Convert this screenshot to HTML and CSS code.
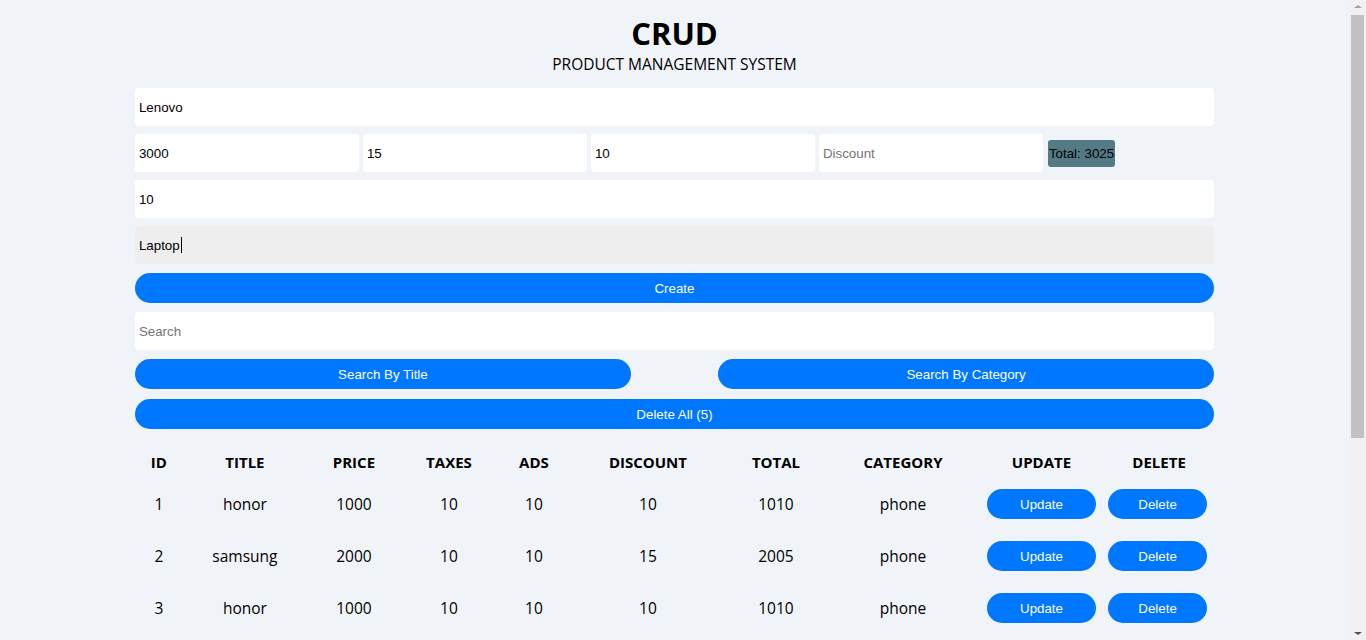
FILE: index.html
```html
<!DOCTYPE html>
<html>
<head>
<meta charset="utf-8">
<title>CRUD</title>
<link rel="stylesheet" href="styles.css">
</head>
<body>
<div class="crud">
  <div class="head">
    <h2 class="title">CRUD</h2>
    <p class="subtitle">PRODUCT MANAGEMENT SYSTEM</p>
  </div>
  <div class="inputs">
    <input class="field" type="text" value="Lenovo" placeholder="Title">
    <div class="price">
      <input class="field small" type="number" value="3000" placeholder="Price">
      <input class="field small" type="number" value="15" placeholder="Taxes">
      <input class="field small" type="number" value="10" placeholder="Ads">
      <input class="field small" type="number" placeholder="Discount">
      <span class="total">Total: 3025</span>
    </div>
    <input class="field" type="number" value="10" placeholder="Count">
    <div class="field focused">Laptop<span class="caret"></span></div>
    <button class="btn create">Create</button>
  </div>
  <div class="search-block">
    <input class="field" type="text" placeholder="Search">
    <div class="search-btns">
      <button class="btn">Search By Title</button>
      <button class="btn">Search By Category</button>
    </div>
    <button class="btn delete-all">Delete All (5)</button>
  </div>
  <table class="outputs">
    <colgroup>
      <col class="c-id"><col class="c-title"><col class="c-price"><col class="c-taxes"><col class="c-ads">
      <col class="c-disc"><col class="c-total"><col class="c-cat"><col class="c-upd"><col class="c-del">
    </colgroup>
    <thead>
      <tr><th>ID</th><th>TITLE</th><th>PRICE</th><th>TAXES</th><th>ADS</th><th>DISCOUNT</th><th>TOTAL</th><th>CATEGORY</th><th>UPDATE</th><th>DELETE</th></tr>
    </thead>
    <tbody>
      <tr><td>1</td><td>honor</td><td>1000</td><td>10</td><td>10</td><td>10</td><td>1010</td><td>phone</td><td><button class="btn upd">Update</button></td><td><button class="btn del">Delete</button></td></tr>
      <tr><td>2</td><td>samsung</td><td>2000</td><td>10</td><td>10</td><td>15</td><td>2005</td><td>phone</td><td><button class="btn upd">Update</button></td><td><button class="btn del">Delete</button></td></tr>
      <tr><td>3</td><td>honor</td><td>1000</td><td>10</td><td>10</td><td>10</td><td>1010</td><td>phone</td><td><button class="btn upd">Update</button></td><td><button class="btn del">Delete</button></td></tr>
      <tr><td>4</td><td>samsung</td><td>2000</td><td>10</td><td>10</td><td>15</td><td>2005</td><td>phone</td><td><button class="btn upd">Update</button></td><td><button class="btn del">Delete</button></td></tr>
      <tr><td>5</td><td>Lenovo</td><td>3000</td><td>15</td><td>10</td><td>0</td><td>3025</td><td>laptop</td><td><button class="btn upd">Update</button></td><td><button class="btn del">Delete</button></td></tr>
    </tbody>
  </table>
</div>
<div class="scrollbar">
  <span class="arrow up"></span>
  <span class="thumb"></span>
  <span class="arrow down"></span>
</div>
</body>
</html>
```
FILE: styles.css
```css
* { box-sizing: border-box; }
html, body { margin: 0; padding: 0; }
body {
  background: #f0f4f8;
  font-family: "Open Sans", "Noto Sans", sans-serif;
  color: #000;
  padding-right: 17px;
}
.crud {
  width: 80%;
  margin: 0 auto;
  padding-bottom: 180px;
}
.head {
  text-align: center;
  padding-top: 13px;
}
.title {
  margin: 0;
  font-size: 31px;
  line-height: 40px;
  font-weight: 700;
}
.subtitle {
  margin: 1px 0 0;
  font-size: 15.5px;
  line-height: 20px;
}
.inputs {
  margin-top: 14px;
  display: flex;
  flex-direction: column;
  gap: 8px;
}
.field {
  display: block;
  width: 100%;
  height: 38px;
  border: none;
  outline: none;
  border-radius: 4px;
  background: #fff;
  padding: 0 4px;
  font-family: "Liberation Sans", Arial, sans-serif;
  font-size: 13.333px;
  color: #000;
}
.field::placeholder { color: #757575; }
.focused {
  background: #eeeeee;
  display: flex;
  align-items: center;
}
.caret {
  display: inline-block;
  width: 1px;
  height: 16px;
  background: #000;
  margin-left: 1px;
}
.price {
  display: flex;
  align-items: center;
  gap: 4px;
}
.field.small {
  width: 224px;
  flex: none;
}
.total {
  margin-left: 1px;
  background: #547a86;
  border-radius: 3px;
  padding: 0 1px;
  height: 27px;
  line-height: 27px;
  font-family: "Liberation Sans", Arial, sans-serif;
  font-size: 13.333px;
}
.btn {
  border: none;
  background: #0077ff;
  color: #fff;
  height: 30px;
  border-radius: 15px;
  font-family: "Liberation Sans", Arial, sans-serif;
  font-size: 13.333px;
  cursor: pointer;
  padding: 0;
}
.create {
  width: 100%;
  margin-top: 1px;
}
.search-block {
  margin-top: 9px;
  display: flex;
  flex-direction: column;
}
.search-btns {
  margin-top: 9px;
  display: flex;
  justify-content: space-between;
}
.search-btns .btn { width: 496px; }
.delete-all {
  width: 100%;
  margin-top: 10px;
}
.outputs {
  width: 100%;
  margin-top: 16px;
  border-collapse: collapse;
  table-layout: fixed;
  text-align: center;
}
.outputs th {
  font-size: 15px;
  font-weight: 700;
  height: 34px;
  padding: 0;
}
.outputs td {
  font-size: 15.5px;
  height: 52px;
  padding: 0 0 2px;
}
.c-id { width: 48px; }
.c-title { width: 124px; }
.c-price { width: 94px; }
.c-taxes { width: 96px; }
.c-ads { width: 74px; }
.c-disc { width: 154px; }
.c-total { width: 102px; }
.c-cat { width: 152px; }
.c-upd { width: 125px; }
.c-del { width: 110px; }
.upd { width: 109px; }
.del { width: 99px; margin-right: 3px; }
td .btn { vertical-align: middle; }

.scrollbar {
  position: fixed;
  top: 0;
  right: 0;
  width: 17px;
  height: 100vh;
  background: #f1f1f1;
  display: flex;
  flex-direction: column;
  align-items: center;
}
.thumb {
  width: 13px;
  margin-top: 7px;
  height: 423px;
  background: #c1c1c1;
}
.arrow {
  width: 0;
  height: 0;
  border-left: 4px solid transparent;
  border-right: 4px solid transparent;
}
.arrow.up {
  margin-top: 5px;
  border-bottom: 3px solid #a3a3a3;
}
.arrow.down {
  margin-top: auto;
  margin-bottom: 5px;
  border-top: 3px solid #505050;
}
```
